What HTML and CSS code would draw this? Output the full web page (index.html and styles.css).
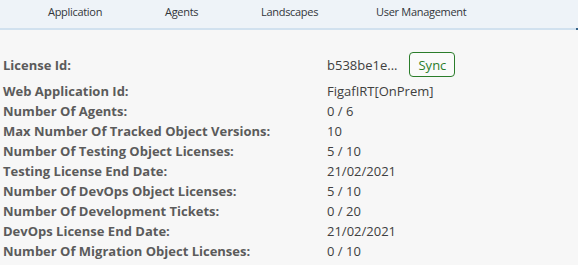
FILE: index.html
```html
<!DOCTYPE html>
<html>
<head>
<meta charset="utf-8">
<link rel="stylesheet" href="styles.css">
</head>
<body>
<header class="topbar">
  <nav class="tabs">
    <span class="tab">Application</span>
    <span class="tab">Agents</span>
    <span class="tab">Landscapes</span>
    <span class="tab">User Management</span>
  </nav>
  <span class="sel-marker"></span>
</header>
<main class="details">
  <div class="row row-license">
    <span class="label">License Id:</span>
    <span class="value"><span>b538be1e...</span><button class="sync">Sync</button></span>
  </div>
  <div class="row"><span class="label">Web Application Id:</span><span class="value">FigafIRT[OnPrem]</span></div>
  <div class="row"><span class="label">Number Of Agents:</span><span class="value">0 / 6</span></div>
  <div class="row"><span class="label">Max Number Of Tracked Object Versions:</span><span class="value">10</span></div>
  <div class="row"><span class="label">Number Of Testing Object Licenses:</span><span class="value">5 / 10</span></div>
  <div class="row"><span class="label">Testing License End Date:</span><span class="value">21/02/2021</span></div>
  <div class="row"><span class="label">Number Of DevOps Object Licenses:</span><span class="value">5 / 10</span></div>
  <div class="row"><span class="label">Number Of Development Tickets:</span><span class="value">0 / 20</span></div>
  <div class="row"><span class="label">DevOps License End Date:</span><span class="value">21/02/2021</span></div>
  <div class="row"><span class="label">Number Of Migration Object Licenses:</span><span class="value">0 / 10</span></div>
</main>
</body>
</html>
```
FILE: styles.css
```css
html, body {
  margin: 0;
  padding: 0;
  background: #f7f7f7;
  font-family: "Open Sans", "Noto Sans", sans-serif;
}
.topbar {
  position: relative;
  height: 28px;
  background: #eef3f8;
  border-bottom: 2px solid #d1e1ef;
}
.tabs {
  display: flex;
  align-items: flex-start;
  padding: 4px 0 0 48px;
  font-size: 11px;
  line-height: 16px;
  letter-spacing: -0.3px;
  color: #32363a;
}
.tab:nth-child(1) { width: 117px; }
.tab:nth-child(2) { width: 96px; }
.tab:nth-child(3) { width: 115px; }
.sel-marker {
  position: absolute;
  right: 0;
  bottom: -2px;
  width: 2px;
  height: 2px;
  background: #346187;
}
.details {
  padding: 21px 0 0 3px;
}
.row {
  display: grid;
  grid-template-columns: 324px auto;
  align-items: center;
  height: 20px;
  font-size: 13px;
}
.row-license {
  height: 27px;
  margin-bottom: 3px;
}
.label {
  font-weight: 700;
  color: #5b5b5b;
}
.value {
  color: #404040;
  display: flex;
  align-items: center;
  gap: 12px;
}
.sync {
  font-family: inherit;
  font-size: 13px;
  color: #2b7d2b;
  background: #fafafa;
  border: 1px solid #2b7d2b;
  border-radius: 4px;
  height: 25px;
  padding: 0 8px;
}
```
